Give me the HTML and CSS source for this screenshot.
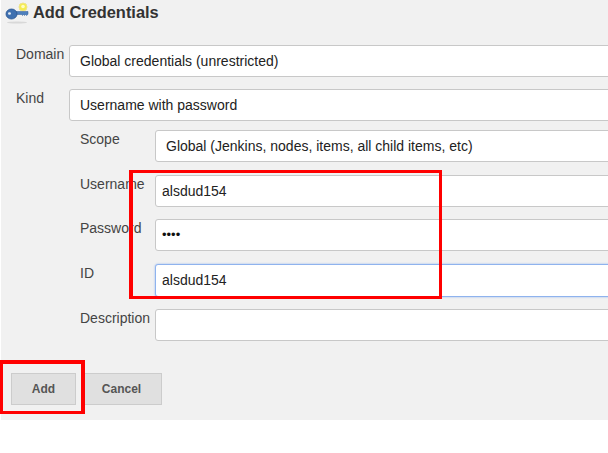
FILE: index.html
```html
<!DOCTYPE html>
<html lang="en">
<head>
    <meta charset="UTF-8">
    <title>Add Credentials</title>
    <link rel="stylesheet" href="styles.css">
</head>
<body>

<div class="panel">
    <h1 class="title">
        <svg class="key-icon" width="28" height="24" viewBox="0 0 28 24">
            <ellipse cx="16" cy="22.500" rx="10" ry="1" fill="#d8d8d8"/>
            <circle cx="22" cy="7" r="4" fill="#f5ec4e" stroke="#efe48a"/>
            <circle cx="22" cy="6.500" r="1.800" fill="#fffcc0"/>
            <path d="M13 11.500h14v2.800l-1.500 1.200-1-1-1 1-1-1-1 1-1-1h-7.500z" fill="#4f80bd" stroke="#2f5a94" stroke-width=".5"/>
            <ellipse cx="10.500" cy="14" rx="5.500" ry="5" fill="#3f70b0" stroke="#2a5590" stroke-width=".8"/>
            <ellipse cx="8.500" cy="13.500" rx="1.500" ry="1.300" fill="#e3ebf5"/>
        </svg>
        Add Credentials
    </h1>

    <div class="row">
        <label class="row-label">Domain</label>
        <div class="field">Global credentials (unrestricted)</div>
    </div>
    <div class="row">
        <label class="row-label">Kind</label>
        <div class="field">Username with password</div>
    </div>

    <div class="sub-form">
        <div class="row">
            <label class="row-label">Scope</label>
            <div class="field">Global (Jenkins, nodes, items, all child items, etc)</div>
        </div>
        <div class="row">
            <label class="row-label">Username</label>
            <div class="field field-input">alsdud154</div>
        </div>
        <div class="row">
            <label class="row-label">Password</label>
            <div class="field field-input field-password">••••</div>
        </div>
        <div class="row">
            <label class="row-label">ID</label>
            <div class="field field-input field-focus">alsdud154</div>
        </div>
        <div class="row">
            <label class="row-label">Description</label>
            <div class="field field-input"></div>
        </div>
    </div>

    <div class="buttons">
        <button class="btn btn-add" type="button">Add</button>
        <button class="btn btn-cancel" type="button">Cancel</button>
    </div>
</div>

<!-- red annotations drawn over the screenshot -->
<div class="mark mark-fields"></div>
<div class="mark mark-add"></div>

</body>
</html>
```

FILE: styles.css
```css
html, body {
    height: 100%;
}
body {
    font-family: "Liberation Sans", Arial, sans-serif;
    margin: 0;
    padding: 0;
    background-color: #fff;
    overflow: hidden;
    position: relative;
}
.panel {
    margin-left: 1px;
    height: 420px;
    box-sizing: border-box;
    background-color: #f1f1f1;
    overflow: hidden;
}
.title {
    display: flex;
    align-items: center;
    gap: 4px;
    height: 24px;
    margin: 0 0 21px 0;
    font-size: 16.4px;
    font-weight: bold;
    color: #333;
}
.key-icon {
    flex: none;
}
.row {
    display: flex;
    margin-bottom: 12px;
}
.row-label {
    flex: none;
    width: 68px;
    padding-left: 15px;
    box-sizing: border-box;
    padding-top: 1px;
    font-size: 14px;
    line-height: 16px;
    color: #444;
}
.field {
    flex: none;
    width: 600px;
    height: 32px;
    box-sizing: border-box;
    padding: 0 10px;
    background-color: #fff;
    border: 1px solid #c8c8c8;
    border-radius: 3px;
    font-size: 14px;
    line-height: 30px;
    color: #222;
}
.field-input {
    padding: 0 6px;
}
.field-password {
    font-size: 13px;
    color: #111;
}
.field-focus {
    height: 33px;
    border: 1px solid #8fb3ee;
    box-shadow: 0 0 2px #8fb3ee;
}
.sub-form {
    margin-top: -3px;
}
.sub-form .row {
    margin-bottom: 12.6px;
}
.sub-form .row-label {
    width: 154px;
    padding-left: 79px;
    white-space: nowrap;
}
.buttons {
    display: flex;
    gap: 5px;
    margin: 32px 0 0 10px;
}
.btn {
    height: 32px;
    box-sizing: border-box;
    background-color: #e0e0e0;
    border: 1px solid #ccc;
    font-family: inherit;
    font-size: 12px;
    font-weight: bold;
    color: #555;
    padding: 0;
}
.btn-add {
    width: 65px;
}
.btn-cancel {
    width: 81px;
}
.mark {
    position: absolute;
    box-sizing: border-box;
    border: 3px solid #f00;
}
.mark-fields {
    left: 129px;
    top: 170px;
    width: 313px;
    height: 129px;
    border-left-width: 4px;
}
.mark-add {
    left: 0;
    top: 360px;
    width: 85px;
    height: 54px;
    border-top-width: 4px;
    border-right-width: 4px;
}
```
